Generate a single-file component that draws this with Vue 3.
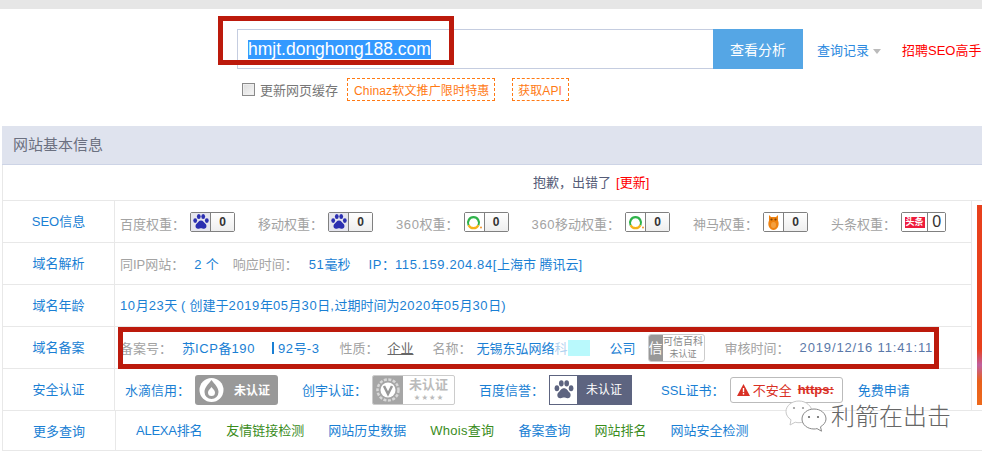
<script setup>
const weights = [
  { label: '百度权重：', icon: 'paw' },
  { label: '移动权重：', icon: 'paw' },
  { label: '360权重：', icon: 'ring' },
  { label: '360移动权重：', icon: 'ring' },
  { label: '神马权重：', icon: 'owl' },
  { label: '头条权重：', icon: 'toutiao' }
];

const moreLinks = [
  { text: 'ALEXA排名', green: false },
  { text: '友情链接检测', green: true },
  { text: '网站历史数据', green: false },
  { text: 'Whois查询', green: true },
  { text: '备案查询', green: false },
  { text: '网站排名', green: true },
  { text: '网站安全检测', green: false }
];

// 数字和英文比中文字体宽一点，分开包一层
function runs(text) {
  return text.match(/[\x21-\x7e]+|[^\x21-\x7e]+/g).map((t) => ({
    text: t,
    latin: /^[\x21-\x7e]/.test(t)
  }));
}

const ipText = runs('IP：115.159.204.84[上海市 腾讯云]');
const ageText = runs('10月23天 ( 创建于2019年05月30日,过期时间为2020年05月30日)');
</script>

<template>
  <div class="page">
    <div class="top-band"></div>

    <div class="search-line">
      <div class="search-box">
        <span class="search-text">hmjt.donghong188.com</span>
      </div>
      <button class="search-btn">查看分析</button>
      <a class="history">查询记录<i class="caret"></i></a>
      <a class="hire">招聘SEO高手</a>
    </div>

    <div class="option-line">
      <span class="check"></span>
      <span class="check-label">更新网页缓存</span>
      <a class="dashed dashed-first">Chinaz软文推广限时特惠</a>
      <a class="dashed dashed-second">获取API</a>
    </div>

    <section class="panel">
      <h2 class="panel-head">网站基本信息</h2>
      <div class="notice">抱歉，出错了<a class="refresh">[更新]</a></div>

      <div class="middle">
        <div class="rows">
          <div class="row">
            <div class="row-name">SEO信息</div>
            <div class="row-body weights">
              <div v-for="w in weights" :key="w.label" class="weight">
                <span class="label weight-label"><span v-for="r in runs(w.label)" :key="r.text" :class="{ num: r.latin }">{{ r.text }}</span></span>
                <span class="rank" :class="{ 'rank-wide': w.icon === 'toutiao' }">
                  <span class="rank-icon" :class="{ 'rank-icon-paw': w.icon === 'paw' }">
                    <svg v-if="w.icon === 'paw'" width="18" height="18" viewBox="0 0 18 18">
                      <g fill="#2b2fb0">
                        <ellipse cx="3.2" cy="7.6" rx="1.9" ry="2.4" />
                        <ellipse cx="6.8" cy="3.6" rx="1.9" ry="2.5" />
                        <ellipse cx="11.2" cy="3.6" rx="1.9" ry="2.5" />
                        <ellipse cx="14.8" cy="7.6" rx="1.9" ry="2.4" />
                        <path d="M9 7.5c2.3 0 3 2 4.4 3.3 1.6 1.4 1.5 4.7-1.3 4.9-1.3.1-2-.5-3.100-.5s-1.800.6-3.100.5c-2.800-.2-2.900-3.500-1.300-4.900C6 9.500 6.700 7.500 9 7.500z" />
                      </g>
                    </svg>
                    <svg v-else-if="w.icon === 'ring'" width="18" height="18" viewBox="0 0 18 18">
                      <path d="M3.600 12.200A5.500 5.500 0 1 1 13.400 12.200" fill="none" stroke="#2fb34a" stroke-width="2.200" />
                      <path d="M13.400 12.200A5.500 5.500 0 0 1 3.600 12.200" fill="none" stroke="#f5b21a" stroke-width="2.200" />
                      <circle cx="16" cy="14.500" r="0.900" fill="#f08a1a" />
                    </svg>
                    <svg v-else-if="w.icon === 'owl'" width="11" height="15" viewBox="0 0 11 15">
                      <path d="M1 0l2 2h5l2-2v5.500c1 2 .800 5-.200 6.700-.900 1.600-2.500 2.800-4.300 2.800s-3.400-1.200-4.300-2.800C.2 10.500 0 7.500 1 5.500z" fill="#ee8210" />
                      <circle cx="3.500" cy="4.500" r="1.100" fill="#7a4208" />
                      <circle cx="7.500" cy="4.500" r="1.100" fill="#7a4208" />
                      <ellipse cx="5.500" cy="10" rx="2.500" ry="3" fill="#f4a040" />
                    </svg>
                    <span v-else class="toutiao">头条</span>
                  </span>
                  <span class="rank-num">0</span>
                </span>
              </div>
            </div>
          </div>

          <div class="row">
            <div class="row-name">域名解析</div>
            <div class="row-body">
              <span class="label">同IP网站：</span>
              <span class="value ip-count"><span class="num">2</span> 个</span>
              <span class="label ip-speed">响应时间：</span>
              <span class="value ip-ms"><span class="num">51</span>毫秒</span>
              <span class="value ip-addr"><span v-for="r in ipText" :key="r.text" :class="{ num: r.latin }">{{ r.text }}</span></span>
            </div>
          </div>

          <div class="row">
            <div class="row-name">域名年龄</div>
            <div class="row-body age">
              <span class="value"><span v-for="(r, i) in ageText" :key="i" :class="{ num: r.latin }">{{ r.text }}</span></span>
            </div>
          </div>

          <div class="row">
            <div class="row-name">域名备案</div>
            <div class="row-body beian">
              <span class="label">备案号：</span>
              <span class="value bei-no">苏<span class="num">ICP</span>备<span class="num">190</span><i class="gap-white"></i><span class="num">92</span>号<span class="num">-3</span></span>
              <span class="label bei-kind">性质：</span>
              <span class="bei-corp">企业</span>
              <span class="label bei-name">名称：</span>
              <span class="value bei-company">无锡东弘网络<span class="fade">科</span><i class="gap-cyan"></i><i class="gap-blank"></i>公司</span>
              <span class="baike">
                <span class="baike-mark">信</span>
                <span class="baike-text">可信百科<small>未认证</small></span>
              </span>
              <span class="label bei-date-label">审核时间：</span>
              <span class="bei-date">2019/12/16 11:41:11</span>
            </div>
          </div>

          <div class="row">
            <div class="row-name">安全认证</div>
            <div class="row-body safety">
              <span class="value">水滴信用：</span>
              <span class="seal seal-drop">
                <svg width="25" height="26" viewBox="0 0 25 26">
                  <circle cx="12.500" cy="13" r="12" fill="#fff" />
                  <path d="M12.500 3c3 4 7 7.500 7 12a7 7 0 0 1-14 0c0-4.500 4-8 7-12z" fill="#9a9a9a" />
                  <path d="M12.500 10c1.500 2 3.500 3.500 3.500 5.500a3.500 3.500 0 0 1-7 0c0-2 2-3.500 3.500-5.500z" fill="#fff" />
                </svg>
                未认证
              </span>
              <span class="value seal-label-2">创宇认证：</span>
              <span class="seal-v">
                <span class="seal-v-mark">
                  <svg width="26" height="26" viewBox="0 0 26 26">
                    <circle cx="13" cy="13" r="10.500" fill="none" stroke="#d8d8d8" stroke-width="2.500" stroke-dasharray="3 1.500" />
                    <circle cx="13" cy="13" r="7.500" fill="#fff" />
                    <path d="M9 9l4 8 4-8" fill="none" stroke="#999" stroke-width="2.500" />
                  </svg>
                </span>
                <span class="seal-v-text">未认证<small>★ ★ ★ ★</small></span>
              </span>
              <span class="value seal-label-3">百度信誉：</span>
              <span class="seal-bd">
                <span class="seal-bd-mark">
                  <svg width="22" height="22" viewBox="0 0 18 18">
                    <g fill="#5d6480">
                      <ellipse cx="3.200" cy="7.600" rx="1.900" ry="2.400" />
                      <ellipse cx="6.800" cy="3.600" rx="1.900" ry="2.500" />
                      <ellipse cx="11.200" cy="3.600" rx="1.900" ry="2.500" />
                      <ellipse cx="14.800" cy="7.600" rx="1.900" ry="2.400" />
                      <path d="M9 7.500c2.300 0 3 2 4.400 3.300 1.600 1.400 1.500 4.700-1.300 4.900-1.300.1-2-.5-3.100-.5s-1.800.6-3.100.5c-2.800-.2-2.900-3.500-1.300-4.900C6 9.500 6.700 7.500 9 7.500z" />
                    </g>
                  </svg>
                </span>
                <span class="seal-bd-text">未认证</span>
              </span>
              <span class="value seal-label-4">SSL证书：</span>
              <span class="ssl">
                <svg width="13" height="12" viewBox="0 0 13 12">
                  <path d="M6.500 0L13 12H0z" fill="#d93025" />
                  <rect x="5.800" y="4" width="1.400" height="4.200" fill="#fff" />
                  <rect x="5.800" y="9" width="1.400" height="1.500" fill="#fff" />
                </svg>
                <span class="ssl-text">不安全</span>
                <s class="ssl-https">https:</s>
              </span>
              <a class="value apply">免费申请</a>
            </div>
          </div>
        </div>

        <aside class="side">
          <div class="side-bar"></div>
        </aside>
      </div>

      <div class="row row-last">
        <div class="row-name">更多查询</div>
        <div class="row-body more">
          <a v-for="l in moreLinks" :key="l.text" class="more-link" :class="{ green: l.green }">{{ l.text }}</a>
        </div>
      </div>
    </section>

    <!-- 标注和水印，压在页面上面 -->
    <div class="mark mark-search"></div>
    <div class="mark mark-beian"></div>
    <div class="watermark">
      <svg class="wechat" width="42" height="35" viewBox="0 0 42 35">
        <path d="M14 1C6.800 1 1 5.700 1 11.500c0 3.400 2 6.400 5 8.300L5 25l5.200-2.800c1.200.3 2.500.5 3.800.5 7.200 0 13-5 13-10.700S21.200 1 14 1z" fill="#fff" stroke="#c8c8c8" />
        <path d="M29 9c-6.600 0-12 4.300-12 10s5.400 10 12 10c1 0 2-.1 3-.4l4.500 2.600-1-4.400c3-1.800 5.500-4.600 5.500-7.800 0-5.700-5.400-10-12-10z" fill="#fff" stroke="#888" />
        <circle cx="9" cy="8" r="1.100" fill="#999" />
        <circle cx="18" cy="8" r="1.100" fill="#999" />
        <circle cx="24" cy="17" r="1.100" fill="#666" />
        <circle cx="33" cy="17" r="1.100" fill="#666" />
      </svg>
      <span class="watermark-text">利箭在出击</span>
    </div>
  </div>
</template>

<style>
html,
body {
  margin: 0;
  background: #fff;
  overflow: hidden;
}
</style>

<style scoped>
.page {
  position: relative;
  width: 982px;
  height: 457px;
  overflow: hidden;
  background: #fff;
  font-family: "Liberation Sans", "Noto Sans CJK SC", sans-serif;
  font-size: 13px;
  color: #666;
}

.top-band {
  height: 9px;
  background: #e6e6e6;
}

.search-line {
  display: flex;
  align-items: center;
  height: 40px;
  margin-top: 20px;
  padding-left: 237px;
  white-space: nowrap;
}

.search-box {
  display: flex;
  flex: none;
  align-items: center;
  box-sizing: border-box;
  width: 476px;
  height: 40px;
  padding-left: 10px;
  border: 1px solid #c5cde0;
  border-right: none;
}

.search-text {
  background: #3399ff;
  color: #fff;
  font-size: 17.5px;
  line-height: 19px;
}

.search-btn {
  flex: none;
  width: 90px;
  height: 40px;
  padding: 0;
  border: none;
  background: #55a6e5;
  color: #fff;
  font: inherit;
  font-size: 14px;
}

.history {
  flex: none;
  margin-left: 14px;
  color: #2d8ae0;
}

.caret {
  display: inline-block;
  margin-left: 4px;
  border: 4px solid transparent;
  border-top: 5px solid #bbb;
  border-bottom: none;
  vertical-align: middle;
}

.hire {
  flex: none;
  margin-left: 21px;
  color: #ff0000;
}

.option-line {
  display: flex;
  align-items: center;
  height: 23px;
  margin-top: 9px;
  padding-left: 242px;
  white-space: nowrap;
}

.check {
  box-sizing: border-box;
  width: 13px;
  height: 13px;
  border: 1px solid #8a8a8a;
  background: linear-gradient(135deg, #dcdcdc, #f6f6f6);
  box-shadow: inset 0 0 0 1px #eee;
}

.check-label {
  margin-left: 5px;
  color: #777;
}

.dashed {
  display: flex;
  align-items: center;
  box-sizing: border-box;
  height: 23px;
  border: 1px dashed #ff7a14;
  color: #ff7a14;
  font-size: 12px;
  letter-spacing: 0.15px;
}

.dashed-first {
  width: 148px;
  margin-left: 9px;
  padding-left: 6px;
}

.dashed-second {
  width: 57px;
  margin-left: 17px;
  padding-left: 5px;
}

.panel {
  margin: 25px 0 0 2px;
}

.panel-head {
  box-sizing: border-box;
  height: 39px;
  margin: 0;
  padding-left: 11px;
  border-bottom: 1px solid #cdd4e6;
  background: #dfe3ee;
  color: #6b7080;
  font-size: 15px;
  font-weight: normal;
  line-height: 38px;
}

.notice {
  box-sizing: border-box;
  height: 36px;
  padding-left: 530px;
  border-left: 1px solid #e8e8e8;
  border-bottom: 1px solid #e8e8e8;
  color: #555c78;
  line-height: 36px;
}

.refresh {
  margin-left: 5px;
  color: #f00;
}

.middle {
  display: flex;
}

.rows {
  box-sizing: border-box;
  width: 970px;
  border-right: 1px solid #e8e8e8;
}

.row {
  display: flex;
  box-sizing: border-box;
  height: 42px;
  border-left: 1px solid #e8e8e8;
  border-bottom: 1px solid #e8e8e8;
}

.row-last {
  height: 40px;
}

.row-name {
  box-sizing: border-box;
  flex: none;
  width: 112px;
  border-right: 1px solid #e8e8e8;
  padding-top: 10px;
  color: #1a7fd4;
  text-align: center;
}

.row-body {
  display: flex;
  flex: 1;
  align-items: center;
  padding-left: 5px;
  white-space: nowrap;
}

.age {
  padding-bottom: 2px;
}

.label {
  color: #a3a3a3;
}

.value {
  color: #1a7fd4;
}

.num {
  letter-spacing: 0.6px;
}

.weights {
  gap: 23px;
  padding-top: 1px;
}

.weight {
  display: flex;
  align-items: center;
}

.weight-label {
  padding-top: 2px;
}

.rank {
  display: flex;
  box-sizing: border-box;
  width: 45px;
  height: 20px;
  margin-left: 5px;
  border: 1px solid #808080;
  border-radius: 2px;
}

.rank-icon {
  display: flex;
  flex: none;
  align-items: center;
  justify-content: center;
  width: 19px;
  border-right: 1px solid #808080;
  background: #fff;
}

.rank-icon-paw {
  background: #e6e6ee;
}

.rank-wide .rank-icon {
  width: 25px;
}

.rank-num {
  flex: 1;
  background: linear-gradient(#fff, #eee);
  color: #333;
  font-size: 12px;
  font-weight: bold;
  line-height: 18px;
  text-align: center;
}

.rank-wide .rank-num {
  background: #fff;
  font-size: 16px;
  font-weight: normal;
}

.toutiao {
  width: 20px;
  height: 11px;
  background: #ee1c3c;
  color: #fff;
  font-size: 9px;
  font-weight: bold;
  line-height: 11px;
  text-align: center;
}

.ip-count {
  margin-left: 10px;
}

.ip-speed {
  margin-left: 14px;
}

.ip-ms {
  margin-left: 11px;
}

.ip-addr {
  margin-left: 18px;
}

.bei-no {
  margin-left: 10px;
}

.gap-white {
  display: inline-block;
  width: 23px;
  height: 12px;
  background: linear-gradient(#1a7fd4, #1a7fd4) no-repeat 17px 0 / 2px 12px;
  vertical-align: -1px;
}

.bei-kind {
  margin-left: 20px;
}

.bei-corp {
  margin-left: 9px;
  color: #666;
  text-decoration: underline;
}

.bei-name {
  margin-left: 19px;
}

.bei-company {
  margin-left: 5px;
}

.fade {
  opacity: 0.35;
}

.gap-cyan {
  display: inline-block;
  width: 22px;
  height: 16px;
  background: #b9f9fc;
  vertical-align: -3px;
}

.gap-blank {
  display: inline-block;
  width: 20px;
}

.baike {
  display: flex;
  box-sizing: border-box;
  width: 57px;
  height: 28px;
  margin-left: 12px;
  border: 1px solid #ccc;
  border-radius: 3px;
  overflow: hidden;
}

.baike-mark {
  flex: none;
  width: 14px;
  background: #999;
  color: #fff;
  font-size: 14px;
  line-height: 26px;
  text-align: center;
}

.baike-text {
  display: flex;
  flex: 1;
  flex-direction: column;
  align-items: center;
  color: #888;
  font-size: 10px;
  line-height: 13px;
}

.baike-text small {
  font-size: 9px;
  line-height: 12px;
}

.bei-date-label {
  margin-left: 20px;
}

.bei-date {
  margin-left: 10px;
  color: #5a78a8;
  letter-spacing: 0.85px;
}

.safety {
  padding-left: 10px;
}

.seal {
  display: flex;
  align-items: center;
  box-sizing: border-box;
  width: 83px;
  height: 30px;
  margin-left: 5px;
  padding-left: 4px;
  border-radius: 3px;
  background: #999;
  color: #fff;
  font-size: 12px;
  font-weight: bold;
  gap: 10px;
}

.seal-label-2 {
  margin-left: 24px;
}

.seal-v {
  display: flex;
  box-sizing: border-box;
  width: 83px;
  height: 30px;
  margin-left: 5px;
  border: 1px solid #ccc;
  border-radius: 2px;
  overflow: hidden;
}

.seal-v-mark {
  display: flex;
  align-items: center;
  justify-content: center;
  width: 30px;
  background: #a6a6a6;
}

.seal-v-text {
  display: flex;
  flex: 1;
  flex-direction: column;
  align-items: center;
  color: #bbb;
  font-size: 13px;
  font-weight: bold;
  line-height: 17px;
}

.seal-v-text small {
  font-size: 6px;
  line-height: 8px;
}

.seal-label-3 {
  margin-left: 24px;
}

.seal-bd {
  display: flex;
  box-sizing: border-box;
  width: 83px;
  height: 30px;
  margin-left: 5px;
  border: 1px solid #5d6480;
}

.seal-bd-mark {
  display: flex;
  align-items: center;
  justify-content: center;
  width: 27px;
  background: #fff;
}

.seal-bd-text {
  flex: 1;
  background: #5d6480;
  color: #fff;
  font-size: 12px;
  line-height: 28px;
  text-align: center;
}

.seal-label-4 {
  margin-left: 29px;
}

.ssl {
  display: flex;
  align-items: center;
  box-sizing: border-box;
  width: 113px;
  height: 26px;
  margin-left: 5px;
  padding-left: 6px;
  border: 1px solid #bbb;
  border-radius: 3px;
  color: #d93025;
  gap: 3px;
}

.ssl-https {
  margin-left: 3px;
  font-weight: bold;
}

.apply {
  margin-left: 15px;
}

.side {
  flex: 1;
  display: flex;
  justify-content: flex-end;
  padding-top: 4px;
  padding-bottom: 5px;
  border-bottom: 1px solid #e8e8e8;
}

.side-bar {
  width: 5px;
  height: 200px;
  background: linear-gradient(#e8401c 0 72%, #c060a0 80%, #e8601c 88%, #ee6a1c);
}

.more {
  gap: 24px;
  padding-left: 20px;
  padding-bottom: 3px;
}

.row-last .row-name {
  width: 113px;
}

.more-link {
  color: #1a7fd4;
}

.more-link:nth-child(1) {
  letter-spacing: -0.25px;
}

.more-link:nth-child(4) {
  letter-spacing: 0.3px;
}

.more-link.green {
  color: #3a8c1c;
}

.mark {
  position: absolute;
  box-sizing: border-box;
  border: 5px solid #bc1a0c;
}

.mark-search {
  left: 218px;
  top: 16px;
  width: 236px;
  height: 49px;
}

.mark-beian {
  left: 118px;
  top: 327px;
  width: 821px;
  height: 42px;
}

.watermark {
  position: absolute;
  left: 785px;
  top: 397px;
  display: flex;
  align-items: center;
}

.watermark-text {
  margin-bottom: 6px;
  margin-left: 4px;
  color: #666;
  font-size: 24px;
  font-weight: 300;
  text-shadow: 0 0 2px #fff;
}
</style>
